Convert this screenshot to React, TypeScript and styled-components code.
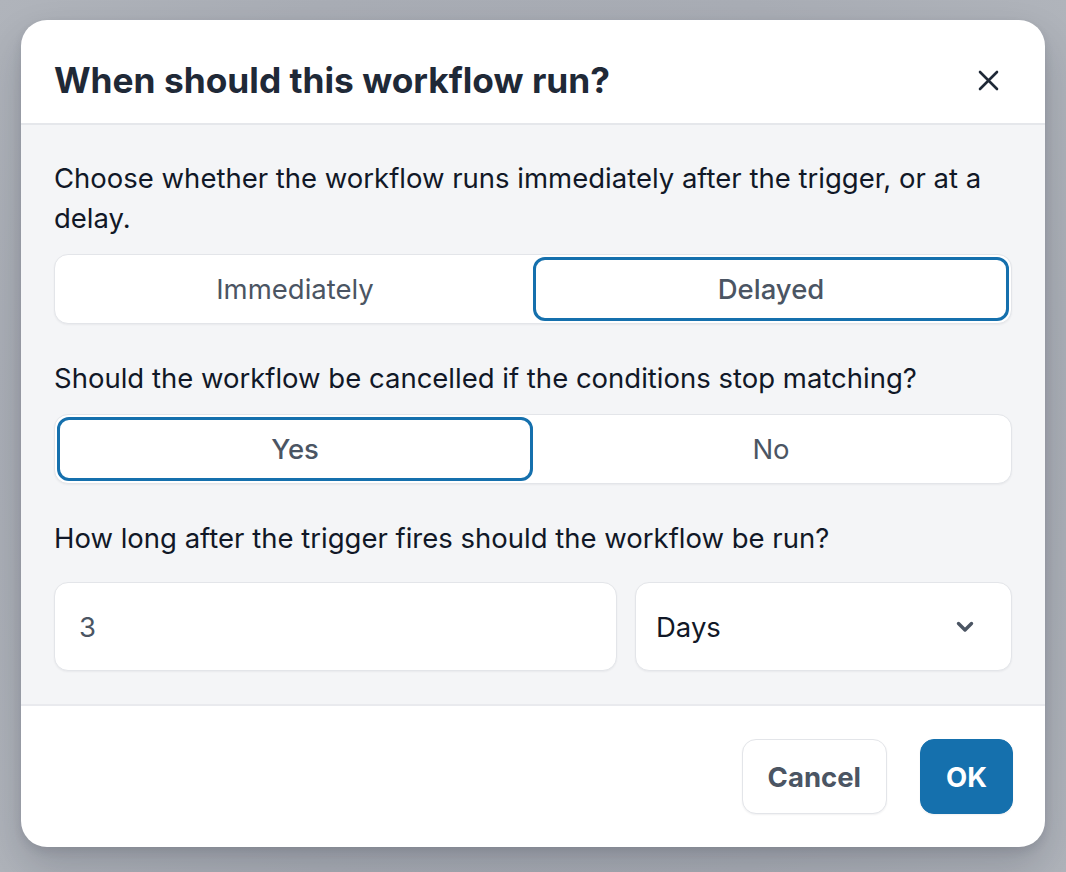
import React, { useState } from "react";
import styled, { createGlobalStyle } from "styled-components";

const GlobalStyle = createGlobalStyle`
  html, body {
    margin: 0;
    padding: 0;
    height: 100%;
  }
  body {
    font-family: Inter, "Liberation Sans", sans-serif;
    background: #a7abb3;
  }
  #root {
    height: 100%;
  }
  * {
    box-sizing: border-box;
  }
`;

const Backdrop = styled.div`
  height: 100%;
  display: flex;
  align-items: center;
  justify-content: center;
  background: radial-gradient(circle at 50% 50%, #a3a7b0 0%, #a9adb5 70%, #b0b4bb 100%);
`;

const Dialog = styled.div`
  width: 1024px;
  margin-top: -5px;
  background: #ffffff;
  border-radius: 26px;
  overflow: hidden;
  box-shadow: 0 20px 40px rgba(17, 24, 39, 0.18), 0 4px 10px rgba(17, 24, 39, 0.1);
`;

const Header = styled.div`
  height: 105px;
  padding: 18px 33px 0;
  display: flex;
  align-items: center;
  justify-content: space-between;
  border-bottom: 2px solid #e5e7eb;
`;

const Title = styled.h2`
  margin: 0;
  font-size: 35.3px;
  font-weight: 700;
  color: #1f2937;
`;

const CloseButton = styled.button`
  width: 40px;
  height: 40px;
  margin-right: 4px;
  border: none;
  background: transparent;
  display: flex;
  align-items: center;
  justify-content: center;
  color: #1f2937;
  cursor: pointer;
  padding: 0;
`;

const Body = styled.div`
  background: #f4f5f7;
  padding: 33px 33px 33px;
  border-bottom: 2px solid #e9eaee;
  display: flex;
  flex-direction: column;
`;

const Label = styled.p`
  margin: 0 0 16px;
  font-size: 27.5px;
  line-height: 40px;
  color: #111827;
`;

const Segmented = styled.div`
  display: flex;
  padding: 2px;
  background: #ffffff;
  border: 1px solid #e3e5e9;
  border-radius: 14px;
  box-shadow: 0 1px 2px rgba(17, 24, 39, 0.05);
  margin-bottom: 34px;
`;

const Segment = styled.button<{ $active?: boolean }>`
  flex: 1;
  height: 64px;
  border-radius: 12px;
  background: #ffffff;
  border: 3px solid ${(p) => (p.$active ? "#1570ad" : "transparent")};
  font-family: inherit;
  font-size: 27.5px;
  font-weight: ${(p) => (p.$active ? 500 : 400)};
  color: #4b5563;
  cursor: pointer;
`;

const FieldRow = styled.div`
  display: grid;
  grid-template-columns: 563fr 377fr;
  gap: 18px;
  margin-top: 8px;
`;

const NumberInput = styled.input`
  min-width: 0;
  height: 89px;
  padding: 0 24px;
  border: 1px solid #e3e5e9;
  border-radius: 14px;
  background: #ffffff;
  font-family: inherit;
  font-size: 27.5px;
  color: #4b5563;
  box-shadow: 0 1px 2px rgba(17, 24, 39, 0.05);
  outline: none;
`;

const Select = styled.div`
  height: 89px;
  padding: 0 37px 0 20px;
  border: 1px solid #e3e5e9;
  border-radius: 14px;
  background: #ffffff;
  display: flex;
  align-items: center;
  justify-content: space-between;
  font-size: 27.5px;
  color: #111827;
  box-shadow: 0 1px 2px rgba(17, 24, 39, 0.05);
`;

const Footer = styled.div`
  padding: 33px 32px 33px;
  display: flex;
  justify-content: flex-end;
  gap: 33px;
`;

const Button = styled.button<{ $primary?: boolean }>`
  height: 75px;
  padding: 0 25px;
  border-radius: 14px;
  font-family: inherit;
  font-size: 27.5px;
  font-weight: 700;
  cursor: pointer;
  border: 1px solid ${(p) => (p.$primary ? "#1570ad" : "#e3e5e9")};
  background: ${(p) => (p.$primary ? "#1570ad" : "#ffffff")};
  color: ${(p) => (p.$primary ? "#ffffff" : "#4b5563")};
  box-shadow: 0 1px 2px rgba(17, 24, 39, 0.06);
`;

const App: React.FC = () => {
  const [timing, setTiming] = useState("delayed");
  const [cancel, setCancel] = useState("yes");
  return (
    <>
      <GlobalStyle />
      <Backdrop>
        <Dialog>
          <Header>
            <Title>When should this workflow run?</Title>
            <CloseButton aria-label="Close">
              <svg width="21" height="21" viewBox="0 0 21 21" fill="none">
                <path
                  d="M2 2L19 19M19 2L2 19"
                  stroke="currentColor"
                  strokeWidth="2.6"
                  strokeLinecap="round"
                />
              </svg>
            </CloseButton>
          </Header>
          <Body>
            <Label>
              Choose whether the workflow runs immediately after the trigger, or at a
              delay.
            </Label>
            <Segmented>
              <Segment $active={timing === "immediate"} onClick={() => setTiming("immediate")}>
                Immediately
              </Segment>
              <Segment $active={timing === "delayed"} onClick={() => setTiming("delayed")}>
                Delayed
              </Segment>
            </Segmented>
            <Label>Should the workflow be cancelled if the conditions stop matching?</Label>
            <Segmented>
              <Segment $active={cancel === "yes"} onClick={() => setCancel("yes")}>
                Yes
              </Segment>
              <Segment $active={cancel === "no"} onClick={() => setCancel("no")}>
                No
              </Segment>
            </Segmented>
            <Label>How long after the trigger fires should the workflow be run?</Label>
            <FieldRow>
              <NumberInput defaultValue="3" />
              <Select>
                <span>Days</span>
                <svg width="18" height="12" viewBox="0 0 18 12" fill="none">
                  <path
                    d="M2.5 2.5L9 9L15.5 2.5"
                    stroke="#4b5563"
                    strokeWidth="3.4"
                    strokeLinecap="round"
                    strokeLinejoin="round"
                  />
                </svg>
              </Select>
            </FieldRow>
          </Body>
          <Footer>
            <Button>Cancel</Button>
            <Button $primary>OK</Button>
          </Footer>
        </Dialog>
      </Backdrop>
    </>
  );
};

export default App;
